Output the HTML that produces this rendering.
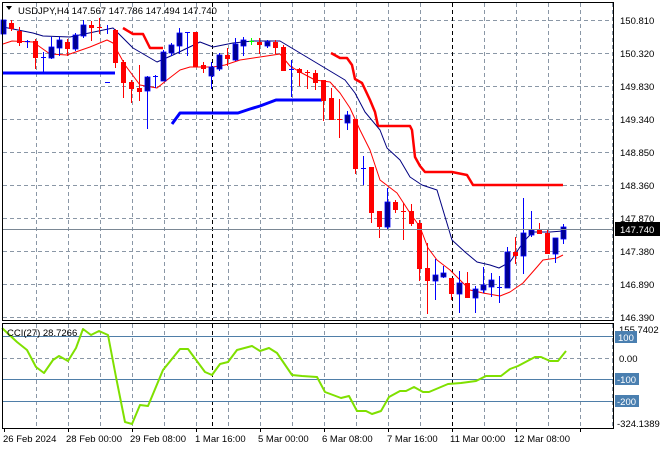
<!DOCTYPE html>
<html><head><meta charset="utf-8"><style>
html,body{margin:0;padding:0;background:#fff;}
svg{display:block;font-family:"Liberation Sans",sans-serif;}
</style></head><body>
<svg id="s" width="660" height="450" viewBox="0 0 660 450" xmlns="http://www.w3.org/2000/svg">
<rect width="660" height="450" fill="#fff"/>
<g id="grid" stroke="#8a97a6" stroke-width="1" stroke-dasharray="4,3" fill="none"></g>
<g id="main"></g>
<g font-size="9.5" fill="#000">
<text x="620" y="24">150.810</text><text x="620" y="57">150.320</text><text x="620" y="90">149.830</text>
<text x="620" y="123">149.340</text><text x="620" y="156">148.850</text><text x="620" y="189">148.360</text>
<text x="620" y="222">147.870</text><text x="620" y="255">147.380</text><text x="620" y="288">146.890</text>
<text x="620" y="321">146.390</text>
</g>
<line x1="3" y1="229.5" x2="614" y2="229.5" stroke="#7a8794"/>
<rect x="615" y="222" width="45" height="14" fill="#000"/>
<text x="620" y="233" font-size="9.5" fill="#fff">147.740</text>
<path d="M6 6 L12 6 L9 10 Z" fill="#000"/>
<text x="18" y="14" font-size="9.5" fill="#000">USDJPY,H4  147.567 147.786 147.494 147.740</text>
<text x="7" y="336" font-size="9.5" fill="#000">CCI(27) 28.7266</text>
<g font-size="9.5">
<text x="619" y="333" fill="#000">155.7402</text>
<rect x="615" y="331" width="22" height="12" fill="#4a7fb0"/><text x="618" y="341" fill="#fff">100</text>
<text x="619" y="362" fill="#000">0.00</text>
<rect x="615" y="373" width="24" height="12" fill="#4a7fb0"/><text x="617" y="383" fill="#fff">-100</text>
<rect x="615" y="395" width="24" height="12" fill="#4a7fb0"/><text x="617" y="405" fill="#fff">-200</text>
<text x="617" y="427" fill="#000">-324.1389</text>
</g>
<g font-size="9.5" fill="#000">
<text x="3" y="442">26 Feb 2024</text><text x="66" y="442">28 Feb 00:00</text><text x="130" y="442">29 Feb 08:00</text>
<text x="195" y="442">1 Mar 16:00</text><text x="258" y="442">5 Mar 00:00</text><text x="322" y="442">6 Mar 08:00</text>
<text x="387" y="442">7 Mar 16:00</text><text x="450" y="442">11 Mar 00:00</text><text x="514" y="442">12 Mar 08:00</text>
</g>
<g stroke="#000" fill="none">
<rect x="2.5" y="2.5" width="611" height="318"/>
<rect x="2.5" y="323.5" width="611" height="105"/>
</g>
</svg>
<script>
var NS="http://www.w3.org/2000/svg",g=document.getElementById('grid'),m=document.getElementById('main');
function el(p,t,a){var e=document.createElementNS(NS,t);for(var k in a)e.setAttribute(k,a[k]);p.appendChild(e);return e;}
[20,53,86,119,152,185,218,251,284,317].forEach(function(y){el(g,'line',{x1:3,x2:613,y1:y+.5,y2:y+.5});});
[358].forEach(function(y){el(g,'line',{x1:3,x2:613,y1:y+.5,y2:y+.5});});
for(var x=36;x<614;x+=32){el(g,'line',{x1:x+.5,x2:x+.5,y1:3,y2:320});el(g,'line',{x1:x+.5,x2:x+.5,y1:324,y2:428});}
[212,452].forEach(function(x){el(g,'line',{x1:x+.5,x2:x+.5,y1:3,y2:320,stroke:'#000'});el(g,'line',{x1:x+.5,x2:x+.5,y1:324,y2:428,stroke:'#000'});});
for(var x=4;x<614;x+=64){el(m,'line',{x1:x+.5,x2:x+.5,y1:429,y2:432,stroke:'#000'});}
[336.5,379.5,401.5].forEach(function(y){el(m,'line',{x1:3,x2:613,y1:y,y2:y,stroke:'#4f7ea8'});});
function pl(pts,c,w){el(m,'polyline',{points:pts,fill:'none',stroke:c,'stroke-width':w,'stroke-linejoin':'round'});}
pl("3,73 115,73",'#0000ff',3);
pl("172,124 180,113 238,113 250,109 260,106 276,100 322,100",'#0000ff',3);
pl("123,28 133,34 143,34 150,48 163,48",'#ff0000',2.5);
pl("331,53 340,58 347,58 352,65 355,79 362,83 370,100 375,112 378,126 410,126 412,130 415,157 420,166 425,172 452,172 467,175 473,185 563,185",'#ff0000',2.5);
pl("3,27 33,33 43,36 70,37 113,28 133,48 157,62 173,55 200,42 213,47 233,43 253,41 280,41 300,53 320,65 345,80 355,93 365,112 380,130 387,148 400,160 410,177 422,185 437,190 452,240 465,252 477,262 490,265 499,268 510,262 520,247 527,238 533,232 550,232 563,231",'#000080',1);
pl("3,44 12,41 33,42 50,54 67,55 90,47 107,40 113,43 125,65 140,85 157,88 167,80 180,70 190,67 213,67 225,65 240,60 260,57 280,54 290,66 300,72 315,80 330,82 340,93 350,108 360,130 370,150 380,180 397,193 410,213 420,227 428,248 437,260 450,270 460,280 470,290 483,293 500,296 510,292 523,283 537,267 543,260 557,258 563,255",'#ff0000',1);
var C=[[0,33,20,20,33],[1,23,28,20,30],[1,31,42,27,45],[0,42,41,40,47],[1,41,57,39,68],[0,57,57,52,71],[0,57,47,37,58],[0,47,40,37,55],[1,42,48,39,55],[0,48,35,33,50],[0,35,25,20,37],[1,25,27,21,40],[1,27,28,18,33],[0,82,82,25,33],[1,30,62,29,67],[1,62,82,60,97],[1,82,88,80,102],[1,88,91,65,100],[0,90,77,76,128],[0,76,76,75,87],[0,80,52,50,80],[0,52,45,43,55],[0,45,33,28,53],[0,32,32,32,55],[1,32,66,32,66],[1,65,68,62,72],[0,75,67,62,88],[0,68,55,53,70],[1,55,58,48,65],[0,59,44,38,60],[0,45,40,37,55],[2,41,41,38,44],[1,42,44,38,53],[0,45,42,40,47],[1,42,47,40,53],[1,47,70,45,70],[0,69,69,60,96],[1,69,72,68,85],[1,72,72,70,88],[1,73,82,70,89],[1,80,100,80,120],[1,98,119,88,119],[1,119,119,99,137],[0,122,115,111,129],[1,119,168,119,173],[0,168,168,156,184],[1,167,212,167,222],[1,211,226,211,237],[0,226,202,188,228],[1,202,209,200,212],[1,211,211,203,239],[1,211,223,204,225],[1,223,268,220,280],[1,268,280,243,313],[0,280,275,259,299],[0,276,273,266,277],[1,278,293,278,299],[0,293,283,271,312],[1,283,297,272,297],[0,297,289,286,312],[0,289,285,267,292],[0,286,280,273,296],[0,287,287,276,302],[0,287,252,247,287],[1,252,255,237,263],[0,255,233,198,273],[0,234,230,211,236],[1,230,233,223,233],[1,233,253,230,253],[0,253,238,238,262],[0,238,227,224,243]];
C.forEach(function(c,i){var x=3+8*i,t=c[0],col=t==1?'#ff0000':(t==2?'#00ff00':'#0000ff'),fill=t==1?'#ff0000':'#000090';
el(m,'line',{x1:x+.5,x2:x+.5,y1:c[3],y2:c[4]+1,stroke:col});
var a=Math.min(c[1],c[2]),b=Math.max(c[1],c[2]);
if(b-a<2){el(m,'line',{x1:x-2,x2:x+3,y1:a+.5,y2:a+.5,stroke:col});}
else el(m,'rect',{x:x-2,y:a,width:5,height:b-a+1,fill:fill,stroke:t==1?'none':'#0000ff','stroke-width':0.8});});
pl("2,328 17,342 27,350 36,367 44,373 53,360 59,356 68,361 76,348 83,329 91,335 99,331 108,335 116,377 125,422 132,424 140,405 148,406 163,370 180,349 188,349 205,372 212,375 220,364 228,362 237,350 252,346 260,351 269,348 277,353 292,375 302,376 317,377 325,392 341,398 349,396 357,411 366,411 372,414 381,411 389,397 400,391 406,391 414,387 423,392 429,392 448,384 461,383 476,381 486,376 501,376 510,369 518,366 535,357 541,357 550,361 558,361 566,351",'#7fe000',2);
</script>
</body></html>
